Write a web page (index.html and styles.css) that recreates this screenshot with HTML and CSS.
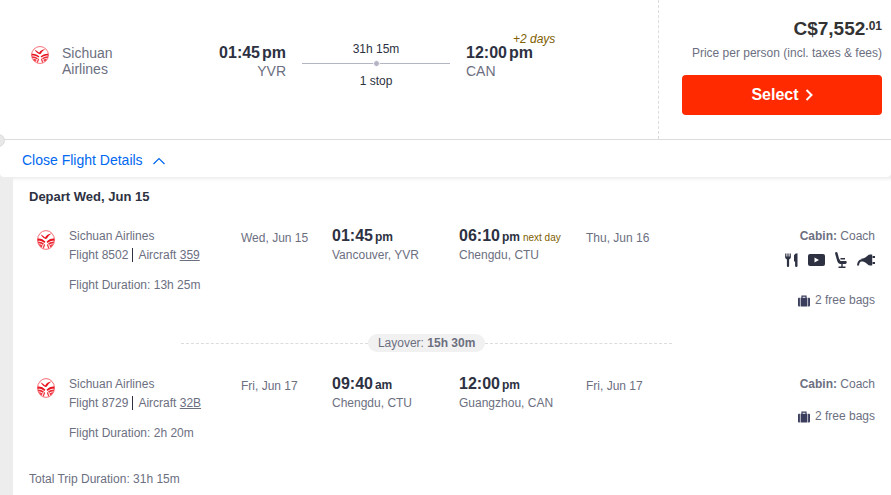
FILE: index.html
```html
<!DOCTYPE html>
<html lang="en">
<head>
    <meta charset="UTF-8">
    <meta name="viewport" content="width=device-width, initial-scale=1.0">
    <title>Flight Details</title>
    <link rel="stylesheet" href="styles.css">
</head>
<body>
    <!-- shared icons -->
    <svg class="sprite" aria-hidden="true">
        <symbol id="logo" viewBox="0 0 20 20" preserveAspectRatio="none">
            <circle cx="10" cy="10" r="9.4" fill="#fff" stroke="#f4636b" stroke-width="1"/>
            <path d="M4 4.200C5.800 5 7.600 6.200 9 7.600 10.300 5.300 12.700 3.700 16 3.400 13.800 4.900 12.200 6.400 11 8.600 10.200 9.200 9.200 9.200 8.400 8.600 6.500 7.500 5 6 4 4.200z" fill="#e81420"/>
            <path d="M.8 8.500C4 8.300 7.500 9.500 9.400 11.800L8.200 12.900C6 11.200 3.700 10.600.8 10.700zM19.200 8.500C16 8.300 12.500 9.500 10.600 11.800L11.800 12.900C14 11.200 16.300 10.600 19.200 10.700z" fill="#e81420"/>
            <path d="M1 11.400C3.500 11.400 6 12.200 7.700 13.600L6.700 14.900C5 13.800 3.500 13.400 1.500 13.400zM19 11.400C16.500 11.400 14 12.200 12.300 13.600L13.300 14.900C15 13.800 16.500 13.400 18.500 13.400z" fill="#ec2a35"/>
            <path d="M2 14.200C3.900 14.200 5.300 14.800 6.300 15.600L5.300 17.200 3.800 16.700zM18 14.200C16.100 14.200 14.700 14.800 13.700 15.600L14.700 17.200 16.200 16.700zM8.600 13.700 9 15.200 7.500 18.500 6.200 18 7.500 15zM11.400 13.700 11 15.200 12.500 18.500 13.800 18 12.500 15z" fill="#f03c46"/>
        </symbol>
        <symbol id="bag" viewBox="0 0 12 12">
            <path d="M4 3V1.200h4V3" fill="none" stroke="#3a3d5c" stroke-width="1.200"/>
            <path d="M1 2.700H1.900v8.800H1Q0 11.500 0 10.500V3.700Q0 2.700 1 2.700zM2.600 2.700h6.800v8.800H2.600zM10.100 2.700H11Q12 2.700 12 3.700v6.800q0 1-1 1h-.9z" fill="#3a3d5c"/>
        </symbol>
    </svg>

    <section class="summary">
        <div class="trip">
            <div class="airline">
                <svg class="logo" role="img" aria-label="Sichuan Airlines"><use href="#logo"/></svg>
                <span class="airline-name">Sichuan Airlines</span>
            </div>
            <div class="departure">
                <div class="time">01:45<span class="ampm">pm</span></div>
                <div class="airport">YVR</div>
            </div>
            <div class="route">
                <div>31h 15m</div>
                <div class="route-line"><span class="stop-dot"></span></div>
                <div>1 stop</div>
            </div>
            <div class="arrival">
                <div class="time">12:00<span class="ampm">pm</span></div>
                <div class="airport">CAN</div>
                <em class="plus-days">+2 days</em>
            </div>
        </div>
        <div class="fare">
            <div class="price">C$7,552<span class="cents">.01</span></div>
            <div class="price-note">Price per person (incl. taxes &amp; fees)</div>
            <button type="button" class="select-button">Select
                <svg class="chevron" viewBox="0 0 8 12" aria-hidden="true"><path d="M1.500 1 6.500 6l-5 5" fill="none" stroke="#fff" stroke-width="2"/></svg>
            </button>
        </div>
        <span class="notch"></span>
    </section>

    <div class="toggle-bar">
        <button type="button" class="toggle" aria-expanded="true" aria-controls="details">Close Flight Details
            <svg class="caret" viewBox="0 0 12 8" aria-hidden="true"><path d="M.5 7 6 1.500 11.500 7" fill="none" stroke="#0068ef" stroke-width="1.200"/></svg>
        </button>
    </div>

    <main class="details" id="details">
        <h2 class="heading">Depart Wed, Jun 15</h2>

        <div class="segment">
            <svg class="logo logo-tall" role="img" aria-label="Sichuan Airlines"><use href="#logo"/></svg>
            <div>
                <div>Sichuan Airlines</div>
                <div><span class="flight-number">Flight 8502</span>Aircraft <a href="#">359</a></div>
                <div class="duration">Flight Duration: 13h 25m</div>
            </div>
            <div class="date">Wed, Jun 15</div>
            <div>
                <div class="time">01:45<span class="ampm">pm</span></div>
                <div>Vancouver, YVR</div>
            </div>
            <div>
                <div class="time">06:10<span class="ampm">pm</span><span class="next-day">next day</span></div>
                <div>Chengdu, CTU</div>
            </div>
            <div class="date">Thu, Jun 16</div>
            <div class="cabin">
                <div><b>Cabin:</b> Coach</div>
                <div class="amenities">
                    <svg class="meal" viewBox="0 0 13 14" role="img" aria-label="Meal">
                        <path d="M.8.500v4M3 .5v4M5.200.500v4" stroke="#2d3142" stroke-width="1.200"/>
                        <path d="M.2 3.500h5.600q.1 2.200-1.700 3V13q0 1-1.100 1t-1.100-1V6.500Q.1 5.700.2 3.500zM9 2.500Q9.500.3 12.500.3V13q0 1-1.200 1t-1.200-1V8.500H9z" fill="#2d3142"/>
                    </svg>
                    <svg class="video" viewBox="0 0 17 12" role="img" aria-label="Video">
                        <rect width="17" height="12" rx="2" fill="#2d3142"/>
                        <path d="M6.500 3.500v5L11 6z" fill="#fff"/>
                    </svg>
                    <svg class="seat" viewBox="0 0 12 16" role="img" aria-label="Seat">
                        <path d="M.5.200Q2.300-.2 2.600 1.200L4 6.500 5.500 9H10.500Q12 9 11.700 10.500T10 12H5Q3 11.700 2.200 9L.2 2Q-.1.600.5.200z" fill="#2d3142"/>
                        <path d="M5.500 6.700h4.500M7 12v3M3.500 15.200h7" fill="none" stroke="#2d3142" stroke-width="1.400"/>
                    </svg>
                    <svg class="plug" viewBox="0 0 18 12" role="img" aria-label="Power outlet">
                        <path d="M4.500 4.500H6Q8.500 3.800 10.200 1.900 11.500.500 13.500.5H15.200V11.500H13.500Q11.500 11.500 10.200 9.900 8.500 8.200 6 7.500H4.500z" fill="#2d3142"/>
                        <path d="M5 6.200Q1.300 6.500 1 11.500" fill="none" stroke="#2d3142" stroke-width="2"/>
                        <path d="M15.500 3H18M15.500 9H18" stroke="#2d3142" stroke-width="2"/>
                    </svg>
                </div>
                <div class="bags"><svg class="bag" aria-hidden="true"><use href="#bag"/></svg>2 free bags</div>
            </div>
        </div>

        <div class="layover"><span class="layover-label">Layover: <b>15h 30m</b></span></div>

        <div class="segment">
            <svg class="logo logo-tall" role="img" aria-label="Sichuan Airlines"><use href="#logo"/></svg>
            <div>
                <div>Sichuan Airlines</div>
                <div><span class="flight-number">Flight 8729</span>Aircraft <a href="#">32B</a></div>
                <div class="duration">Flight Duration: 2h 20m</div>
            </div>
            <div class="date">Fri, Jun 17</div>
            <div>
                <div class="time">09:40<span class="ampm">am</span></div>
                <div>Chengdu, CTU</div>
            </div>
            <div>
                <div class="time">12:00<span class="ampm">pm</span></div>
                <div>Guangzhou, CAN</div>
            </div>
            <div class="date">Fri, Jun 17</div>
            <div class="cabin">
                <div><b>Cabin:</b> Coach</div>
                <div class="bags"><svg class="bag" aria-hidden="true"><use href="#bag"/></svg>2 free bags</div>
            </div>
        </div>

        <div class="total">Total Trip Duration: 31h 15m</div>
    </main>
</body>
</html>
```
FILE: styles.css
```css
* {
    box-sizing: border-box;
}
body {
    margin: 0;
    background-color: #ededed;
    color: #6c6f7f;
    font-family: "Liberation Sans", Arial, sans-serif;
    font-size: 12px;
    line-height: 19px;
    overflow-x: hidden;
}
button {
    border: none;
    font-family: inherit;
    cursor: pointer;
}
.sprite {
    display: block;
    width: 0;
    height: 0;
}
.time {
    color: #2d3142;
    font-size: 16px;
    font-weight: bold;
}
.ampm {
    margin-left: 2px;
}
.logo {
    display: block;
    flex: none;
    width: 18px;
    height: 20px;
}

/* summary row */
.summary {
    position: relative;
    display: flex;
    background-color: #fff;
    border-bottom: 1px solid #dcdcdc;
}
.trip {
    flex: 1;
    display: grid;
    grid-template-columns: 119fr 120fr 148fr 192fr;
    column-gap: 16px;
    padding: 43px 0 0 31px;
    font-size: 14px;
}
.airline {
    display: flex;
    gap: 13px;
    padding-top: 2px;
}
.airline .logo {
    height: 18px;
    margin-top: 1px;
}
.airline-name {
    width: 60px;
    line-height: 16px;
}
.departure {
    text-align: right;
}
.route {
    color: #2d3142;
    font-size: 12px;
    line-height: 12px;
    text-align: center;
}
.route-line {
    display: flex;
    justify-content: center;
    align-items: center;
    height: 17px;
    margin-bottom: 3px;
    background: linear-gradient(#b3b5c2, #b3b5c2) center / 100% 1px no-repeat;
}
.stop-dot {
    width: 7px;
    height: 7px;
    border: 1px solid #fff;
    border-radius: 50%;
    background-color: #b3b5c2;
}
.arrival {
    position: relative;
}
.plus-days {
    position: absolute;
    top: -10px;
    left: 47px;
    color: #806000;
    font-size: 12px;
    line-height: 12px;
}
.fare {
    width: 233px;
    padding: 15px 9px 24px 23px;
    border-left: 1px dashed #dcdcdc;
    text-align: right;
}
.price {
    color: #333;
    font-size: 19px;
    font-weight: bold;
    line-height: 28px;
}
.price-note {
    padding-top: 1px;
}
.cents {
    font-size: 12px;
    vertical-align: 5px;
    line-height: 12px;
}
.select-button {
    display: flex;
    justify-content: center;
    align-items: center;
    gap: 6px;
    width: 100%;
    height: 40px;
    margin-top: 12px;
    border-radius: 4px;
    background-color: #ff2a00;
    color: #fff;
    font-size: 16px;
    font-weight: bold;
}
.chevron {
    width: 8px;
    height: 12px;
}
.notch {
    position: absolute;
    bottom: -8px;
    left: -8px;
    width: 13px;
    height: 13px;
    border: 1px solid #dcdcdc;
    border-radius: 50%;
    background-color: #e8e8e8;
}

/* open / close bar */
.toggle-bar {
    padding: 11px 22px 7px;
    border-radius: 0 0 4px 4px;
    background-color: #fff;
}
.toggle {
    display: flex;
    align-items: center;
    gap: 10px;
    padding: 0;
    background: none;
    color: #0068ef;
    font-size: 14px;
    line-height: 19px;
}
.caret {
    width: 12px;
    height: 8px;
}

/* expanded details */
.details {
    min-height: calc(100vh - 177px);
    margin-left: 13px;
    padding: 10px 16px 6px;
    background-color: #fff;
    box-shadow: inset 0 4px 4px -3px #e4e4e4;
}
.heading {
    margin: 0 0 21px;
    color: #2d3142;
    font-size: 13px;
    line-height: 19px;
}
.segment {
    display: grid;
    grid-template-columns: 32px 172fr 91fr 127fr 127fr 127fr 162fr;
    padding-left: 8px;
    white-space: nowrap;
}
.logo-tall {
    margin-top: 3px;
}
.segment a {
    color: inherit;
}
.flight-number {
    margin-right: 5px;
    padding-right: 4px;
    border-right: 1px solid #2d3142;
}
.duration {
    margin-top: 11px;
}
.date {
    padding-top: 2px;
}
.segment .time {
    line-height: 18px;
}
.segment .ampm {
    font-size: 12px;
}
.next-day {
    margin-left: 3px;
    color: #806000;
    font-size: 10px;
    font-weight: normal;
    line-height: 12px;
}
.cabin {
    text-align: right;
}
.amenities {
    display: flex;
    justify-content: flex-end;
    align-items: center;
    gap: 10px;
    height: 16px;
    margin: 6px 0 23px;
}
.meal {
    width: 13px;
    height: 14px;
}
.video {
    width: 17px;
    height: 12px;
}
.seat {
    width: 12px;
    height: 16px;
}
.plug {
    width: 18px;
    height: 12px;
}
.bags {
    display: flex;
    justify-content: flex-end;
    align-items: center;
    gap: 5px;
    margin-top: 13px;
}
.bag {
    width: 12px;
    height: 12px;
}
.layover {
    display: flex;
    align-items: center;
    margin: 24px 24% 23px 18%;
}
.layover::before,
.layover::after {
    content: "";
    flex: 1;
    border-top: 1px dashed #dcdcdc;
}
.layover-label {
    padding: 0 10px;
    border-radius: 9px;
    background-color: #f1f1f1;
    line-height: 18px;
}
.total {
    margin-top: 27px;
}
```
